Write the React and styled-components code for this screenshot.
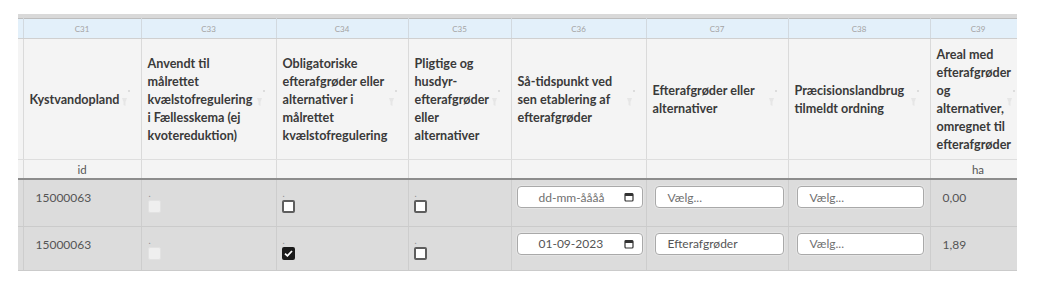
import styled, { createGlobalStyle } from "styled-components";

const GlobalStyle = createGlobalStyle`
  body {
    margin: 0;
    background: #ffffff;
    font-family: Lato, "Liberation Sans", sans-serif;
  }
`;

const COLUMNS = [
  { code: "", title: "", unit: "", width: 5 },
  { code: "C31", title: "Kystvandopland", unit: "id", width: 118, pr: 14 },
  {
    code: "C33",
    title: "Anvendt til målrettet kvælstofregulering i Fællesskema (ej kvotereduktion)",
    unit: "",
    width: 135,
    pr: 18,
  },
  {
    code: "C34",
    title: "Obligatoriske efterafgrøder eller alternativer i målrettet kvælstofregulering",
    unit: "",
    width: 132,
    pr: 14,
  },
  {
    code: "C35",
    title: "Pligtige og husdyr-efterafgrøder eller alternativer",
    unit: "",
    width: 103,
    pr: 16,
  },
  {
    code: "C36",
    title: "Så-tidspunkt ved sen etablering af efterafgrøder",
    unit: "",
    width: 135,
    pr: 18,
  },
  { code: "C37", title: "Efterafgrøder eller alternativer", unit: "", width: 142, pr: 18 },
  { code: "C38", title: "Præcisionslandbrug tilmeldt ordning", unit: "", width: 142, pr: 18 },
  {
    code: "C39",
    title: "Areal med efterafgrøder og alternativer, omregnet til efterafgrøder",
    unit: "ha",
    width: 96,
    pr: 14,
  },
];

const ROWS = [
  { id: "15000063", checked: false, date: "", crop: "", precision: "", area: "0,00", height: 47 },
  { id: "15000063", checked: true, date: "01-09-2023", crop: "Efterafgrøder", precision: "", area: "1,89", height: 42 },
];

const Page = styled.div`
  padding: 14px 0 0 18px;
`;

const TableFrame = styled.div`
  width: 999px;
  overflow: hidden;
  border-top: 4px solid #d9d9d9;
`;

const Table = styled.table`
  table-layout: fixed;
  width: 1008px;
  border-collapse: collapse;
  font-size: 12px;
  color: #444;
`;

const CodeCell = styled.th`
  height: 19px;
  padding: 0;
  background: #e3f0fa;
  border-top: 1px solid #bdbdbd;
  border-right: 1px solid #d2d9df;
  border-bottom: 1px solid #d0d0d0;
  font-size: 8px;
  font-weight: 400;
  color: #a3a3a3;
  text-align: center;
  vertical-align: middle;
`;

const TitleCell = styled.th`
  position: relative;
  height: 119px;
  padding: 1px ${(p) => p.$pr || 0}px 0 6px;
  background: #f4f4f4;
  border-right: 1px solid #dadada;
  border-bottom: 1px solid #dedede;
  font-size: 12.6px;
  font-weight: 700;
  line-height: 18px;
  color: #3a3a3a;
  text-align: left;
  vertical-align: middle;
`;

const SortMark = styled.svg`
  position: absolute;
  right: 10px;
  top: 50%;
  margin-top: -11px;
`;

const UnitCell = styled.th`
  height: 18px;
  padding: 0;
  background: #f4f4f4;
  border-right: 1px solid #dadada;
  border-bottom: 2px solid #8c8c8c;
  font-size: 11.5px;
  font-weight: 400;
  color: #555;
  text-align: center;
  vertical-align: middle;
`;

const DataRow = styled.tr`
  height: ${(p) => p.$height}px;
`;

const DataCell = styled.td`
  padding: ${(p) => (p.$pad ? p.$pad : "9px 12px")};
  background: #dcdcdc;
  border-right: 1px solid #cdcdcd;
  border-bottom: 1px solid #cbcbcb;
  font-size: 12px;
  color: #555;
  vertical-align: top;
  white-space: nowrap;
  overflow: hidden;
`;

const Dot = styled.div`
  height: 10px;
  font-size: 9px;
  line-height: 8px;
  color: #8f8f8f;
  padding-left: 1px;
`;

const Box = styled.span`
  display: flex;
  align-items: center;
  justify-content: center;
  width: 13px;
  height: 13px;
  box-sizing: border-box;
  border-radius: 2px;
  border: ${(p) =>
    p.$disabled ? "1px solid #e2e2e2" : p.$checked ? "2px solid #1a1a1a" : "2px solid #5e5e5e"};
  background: ${(p) => (p.$disabled ? "#efefef" : p.$checked ? "#1a1a1a" : "#ffffff")};
`;

const Field = styled.div`
  display: flex;
  align-items: center;
  height: 22px;
  box-sizing: border-box;
  padding: ${(p) => (p.$date ? "0 8px 0 21px" : "0 10px 0 12px")};
  background: #ffffff;
  border: 1px solid #a9a9a9;
  border-radius: 4px;
  box-shadow: 0 0 0 1px #e4e4e4;
  font-size: 12px;
  color: ${(p) => (p.$muted ? "#707070" : "#555")};
`;

const CalendarIcon = styled.svg`
  margin-left: auto;
`;

function Checkbox({ checked, disabled }) {
  return (
    <Box $checked={checked} $disabled={disabled}>
      {checked && (
        <svg width="9" height="7" viewBox="0 0 9 7">
          <path d="M1 3.6 L3.4 5.8 L8 1" fill="none" stroke="#fff" strokeWidth="1.8" />
        </svg>
      )}
    </Box>
  );
}

function Sort() {
  return (
    <SortMark width="10" height="22" viewBox="0 0 10 22">
      <circle cx="8" cy="3" r="1.1" fill="#d6d6d6" />
      <path d="M1 10 L6 10 L4.5 14 L4.5 18 L2.5 17 L2.5 14 Z" fill="#e6e6e6" />
    </SortMark>
  );
}

function DateField({ value }) {
  return (
    <Field $date $muted={!value}>
      {value || "dd-mm-åååå"}
      <CalendarIcon width="10" height="10" viewBox="0 0 10 10">
        <rect x="1" y="1.5" width="8" height="7.5" rx="1" fill="none" stroke="#333" strokeWidth="1.2" />
        <rect x="1" y="1.5" width="8" height="2.5" fill="#333" />
      </CalendarIcon>
    </Field>
  );
}

function App() {
  return (
    <Page>
      <GlobalStyle />
      <TableFrame>
        <Table>
          <colgroup>
            {COLUMNS.map((col, i) => (
              <col key={i} style={{ width: col.width }} />
            ))}
          </colgroup>
          <thead>
            <tr>
              {COLUMNS.map((col, i) => (
                <CodeCell key={i}>{col.code}</CodeCell>
              ))}
            </tr>
            <tr>
              {COLUMNS.map((col, i) => (
                <TitleCell key={i} $pr={col.pr}>
                  {col.title}
                  {col.title && <Sort />}
                </TitleCell>
              ))}
            </tr>
            <tr>
              {COLUMNS.map((col, i) => (
                <UnitCell key={i}>{col.unit}</UnitCell>
              ))}
            </tr>
          </thead>
          <tbody>
            {ROWS.map((row, i) => (
              <DataRow key={i} $height={row.height}>
                <DataCell $pad="0" />
                <DataCell $pad="10px 12px">{row.id}</DataCell>
                <DataCell $pad="10px 6px">
                  <Dot>.</Dot>
                  <Checkbox disabled />
                </DataCell>
                <DataCell $pad="10px 5px">
                  <Dot>.</Dot>
                  <Checkbox checked={row.checked} />
                </DataCell>
                <DataCell $pad="10px 5px">
                  <Dot>.</Dot>
                  <Checkbox />
                </DataCell>
                <DataCell $pad="6px 3px 0 5px">
                  <DateField value={row.date} />
                </DataCell>
                <DataCell $pad="6px 4px 0 8px">
                  <Field $muted={!row.crop}>{row.crop || "Vælg..."}</Field>
                </DataCell>
                <DataCell $pad="6px 6px 0 8px">
                  <Field $muted>{row.precision || "Vælg..."}</Field>
                </DataCell>
                <DataCell $pad="10px 12px">{row.area}</DataCell>
              </DataRow>
            ))}
          </tbody>
        </Table>
      </TableFrame>
    </Page>
  );
}

export default App;
